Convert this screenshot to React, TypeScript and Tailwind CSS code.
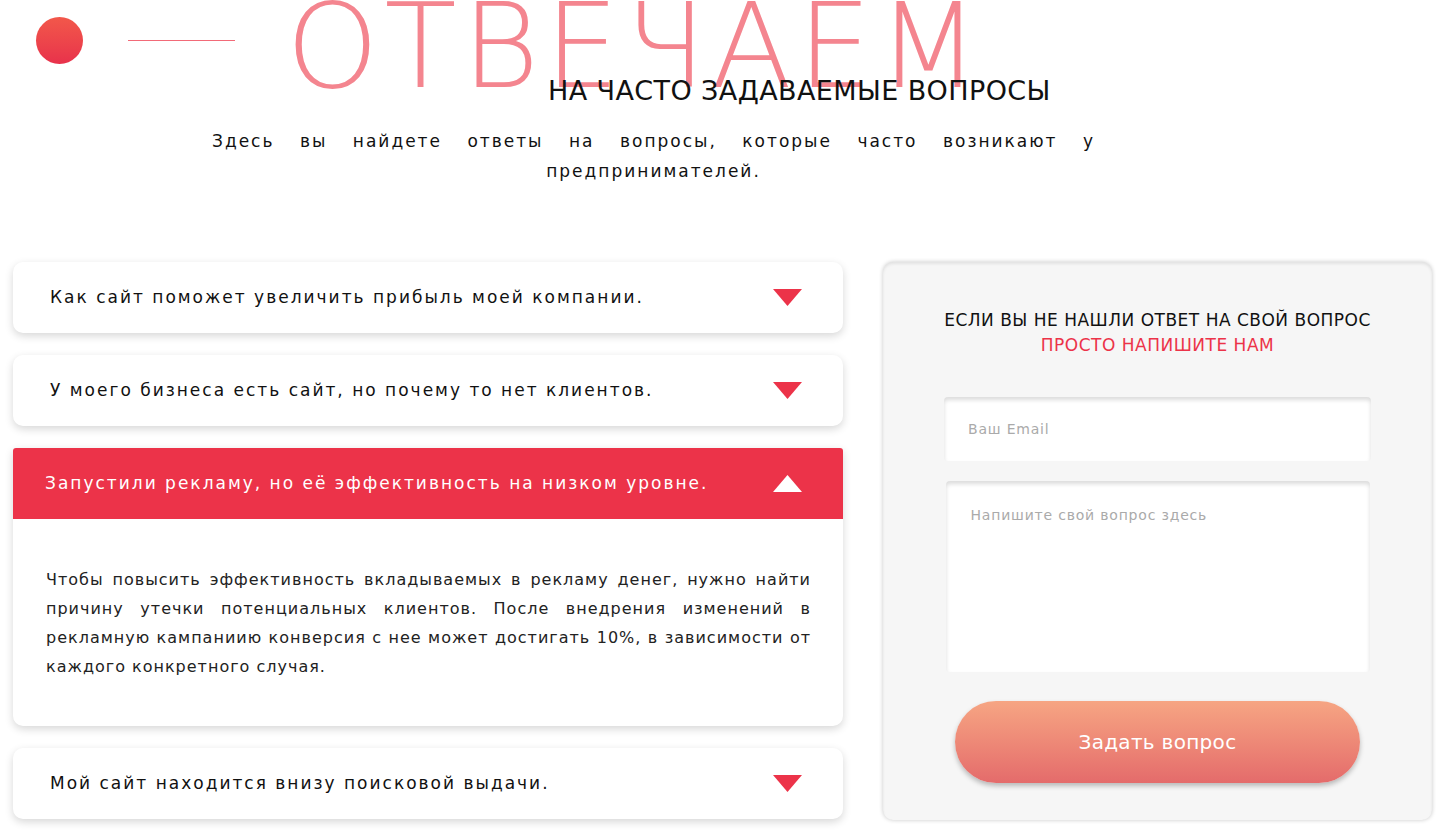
import { useState } from "react";

type Faq = {
  q: string;
  a?: string;
};

const faqs: Faq[] = [
  { q: "Как сайт поможет увеличить прибыль моей компании." },
  { q: "У моего бизнеса есть сайт, но почему то нет клиентов." },
  {
    q: "Запустили рекламу, но её эффективность на низком уровне.",
    a: "Чтобы повысить эффективность вкладываемых в рекламу денег, нужно найти причину утечки потенциальных клиентов. После внедрения изменений в рекламную кампаниию конверсия с нее может достигать 10%, в зависимости от каждого конкретного случая.",
  },
  { q: "Мой сайт находится внизу поисковой выдачи." },
];

function Triangle({ up }: { up?: boolean }) {
  return (
    <svg width="29" height="17" viewBox="0 0 29 17" className="shrink-0">
      {up ? (
        <polygon points="0,17 29,17 14.5,0" fill="#ffffff" />
      ) : (
        <polygon points="0,0 29,0 14.5,17" fill="#ec3349" />
      )}
    </svg>
  );
}

export default function App() {
  const [open, setOpen] = useState<number>(2);

  return (
    <div className="min-h-screen bg-white overflow-hidden text-[#111] font-['DejaVu_Sans',sans-serif]">
      {/* Заголовок */}
      <div className="flex items-start h-[80px]">
        <div className="ml-[36px] mt-[17px] w-[47px] h-[47px] rounded-full bg-gradient-to-b from-[#f2574a] to-[#e8314b] shrink-0" />
        <div className="ml-[45px] mt-[40px] w-[107px] h-px bg-[#f26a78] shrink-0" />
        <h1 className="ml-[51px] -mt-[13px] text-[118px] leading-none tracking-[5.5px] text-[#f4858f] whitespace-nowrap font-light">
          ОТВЕЧАЕМ
        </h1>
      </div>
      <h2 className="pl-[548px] -mt-[4px] text-[27px] leading-[30px] tracking-[0.4px] uppercase relative">
        На часто задаваемые вопросы
      </h2>
      <p className="ml-[212px] mt-[20px] w-[883px] text-[17px] leading-[30px] tracking-[2px] text-justify [text-align-last:center]">
        Здесь вы найдете ответы на вопросы, которые часто возникают у предпринимателей.
      </p>

      <div className="flex items-start mt-[76px]">
        {/* Список вопросов */}
        <div className="ml-[13px] w-[830px] flex flex-col gap-[22px]">
          {faqs.map((f, i) => {
            const active = open === i;
            return (
              <div
                key={i}
                className={`bg-white shadow-[0_3px_8px_rgba(0,0,0,0.16)] overflow-hidden ${
                  active ? "rounded-t-[3px] rounded-b-[10px]" : "rounded-[10px]"
                }`}
              >
                <button
                  onClick={() => setOpen(active ? -1 : i)}
                  className={`w-full h-[71px] flex items-center justify-between pr-[41px] text-left text-[17px] tracking-[2px] ${
                    active ? "bg-[#ec3349] text-white pl-[32px]" : "pl-[37px] text-[#111]"
                  }`}
                >
                  <span>{f.q}</span>
                  <Triangle up={active} />
                </button>
                {active && f.a && (
                  <p className="pl-[33px] pr-[32px] pt-[46px] pb-[45px] text-[16px] leading-[29px] tracking-[1px] text-justify text-[#222]">
                    {f.a}
                  </p>
                )}
              </div>
            );
          })}
        </div>

        {/* Форма */}
        <div className="ml-[40px] w-[549px] h-[558px] rounded-[10px] bg-[#f6f6f6] shadow-[0_0_4px_rgba(0,0,0,0.22),inset_0_2px_3px_rgba(0,0,0,0.08)] flex flex-col items-center pt-[46px]">
          <div className="text-center text-[17px] leading-[25px] tracking-[0.5px] uppercase">
            <div className="text-[#111]">Если вы не нашли ответ на свой вопрос</div>
            <div className="text-[#ec3349]">Просто напишите нам</div>
          </div>
          <input
            placeholder="Ваш Email"
            className="mt-[39px] w-[427px] h-[64px] rounded-[4px] bg-white px-[24px] text-[14px] tracking-[0.8px] outline-none placeholder:text-[#aaa] shadow-[inset_0_3px_4px_rgba(0,0,0,0.14)]"
          />
          <textarea
            placeholder="Напишите свой вопрос здесь"
            className="mt-[20px] w-[424px] h-[191px] rounded-[4px] bg-white px-[25px] pt-[24px] text-[14px] tracking-[0.8px] resize-none outline-none placeholder:text-[#aaa] shadow-[inset_0_3px_4px_rgba(0,0,0,0.14)]"
          />
          <button className="mt-[29px] w-[405px] h-[82px] rounded-full bg-gradient-to-b from-[#f6a583] to-[#e46b6b] text-white text-[20px] tracking-[0.3px] shadow-[0_3px_5px_rgba(0,0,0,0.25)]">
            Задать вопрос
          </button>
        </div>
      </div>
    </div>
  );
}
